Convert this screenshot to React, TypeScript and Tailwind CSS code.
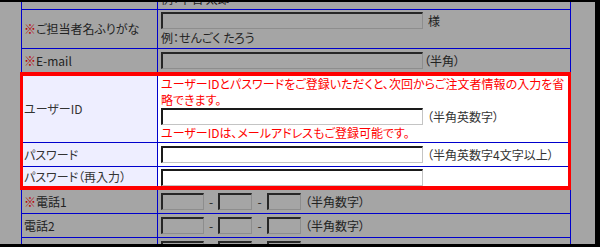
import React from "react";

// dimmed form table with the highlighted (red framed) login block

type FieldProps = { w: string; dim?: boolean };

const Field: React.FC<FieldProps> = ({ w, dim }) => (
  <input
    type="text"
    readOnly
    className={
      dim
        ? `${w} h-[17px] shrink-0 bg-[#a5a5a5] border-t-2 border-l-2 border-r border-b border-t-[#262626] border-l-[#262626] border-r-[#8d8d8d] border-b-[#8d8d8d] outline-none`
        : `${w} h-[17px] shrink-0 bg-white border-t-2 border-l-2 border-r border-b border-t-[#1a1a1a] border-l-[#1a1a1a] border-r-[#c4c4c4] border-b-[#c4c4c4] outline-none`
    }
  />
);

const Req = () => <span className="text-[#b80000]">※</span>;

const Dash = () => <span className="w-[14px] text-center shrink-0">-</span>;

const TelInputs = () => (
  <div className="flex items-center pl-[3px] flex-1">
    <Field w="w-[43px]" dim />
    <Dash />
    <Field w="w-[34px]" dim />
    <span className="w-[15px] text-center shrink-0">-</span>
    <Field w="w-[34px]" dim />
    <span className="ml-[4px]">（半角数字）</span>
  </div>
);

export default function App() {
  return (
    <div className="w-[600px] h-[247px] overflow-hidden bg-[#a5a5a5] border-t-2 border-r-[5px] border-b-[3px] border-black text-[12px] leading-4 text-[#222] font-['Noto_Sans_CJK_JP','Noto_Sans',sans-serif] [font-feature-settings:'palt']">
      <div className="ml-[21px] w-[550px] -mt-[31px]">
        {/* お名前 (cut off) */}
        <div className="flex h-[39px] border-x border-b border-[#0000cc]">
          <div className="w-[136px] border-r border-[#0000cc]" />
          <div className="flex-1 pl-[3px] pt-[2px]">
            <div className="flex items-center h-[17px]">
              <Field w="w-[262px]" dim />
            </div>
            <div className="leading-[17px]">例：千石 太郎</div>
          </div>
        </div>

        {/* ふりがな */}
        <div className="flex h-[39px] border-x border-b border-[#0000cc]">
          <div className="w-[136px] border-r border-[#0000cc] flex items-center pl-[2px]">
            <Req />ご担当者名ふりがな
          </div>
          <div className="flex-1 pl-[3px] pt-[2px]">
            <div className="flex items-center h-[17px]">
              <Field w="w-[262px]" dim />
              <span className="ml-[5px]">様</span>
            </div>
            <div className="leading-[17px]">例：せんごく たろう</div>
          </div>
        </div>

        {/* E-mail */}
        <div className="flex h-[23px] border-x border-[#0000cc]">
          <div className="w-[136px] border-r border-[#0000cc] flex items-center pl-[2px]">
            <Req />E-mail
          </div>
          <div className="flex-1 pl-[3px] flex items-center">
            <Field w="w-[262px]" dim />
            <span className="ml-[1px]">（半角）</span>
          </div>
        </div>

        {/* highlighted block */}
        <div className="-ml-px w-[551px] border-x-[3px] border-y-4 border-[#ff0000] bg-white text-[#333]">
          <div className="flex h-[67px] border-b border-[#0000cc]">
            <div className="w-[135px] bg-[#eeeeff] border-r border-[#0000cc] flex items-center pl-[1px]">
              ユーザーID
            </div>
            <div className="flex-1 pl-[3px] whitespace-nowrap">
              <div className="text-[#ff0000]">
                ユーザーIDとパスワードをご登録いただくと、次回からご注文者情報の入力を省
                <br />
                略できます。
              </div>
              <div className="flex items-center h-[17px]">
                <Field w="w-[262px]" />
                <span className="ml-[4px]">（半角英数字）</span>
              </div>
              <div className="text-[#ff0000]">ユーザーIDは、メールアドレスもご登録可能です。</div>
            </div>
          </div>
          <div className="flex h-[24px] border-b border-[#0000cc]">
            <div className="w-[135px] bg-[#eeeeff] border-r border-[#0000cc] flex items-center pl-[1px]">
              パスワード
            </div>
            <div className="flex-1 pl-[3px] flex items-center">
              <Field w="w-[262px]" />
              <span className="ml-[4px]">（半角英数字4文字以上）</span>
            </div>
          </div>
          <div className="flex h-[19px]">
            <div className="w-[135px] bg-[#eeeeff] border-r border-[#0000cc] flex items-center pl-[1px]">
              パスワード（再入力）
            </div>
            <div className="flex-1 pl-[3px] pt-[2px]">
              <Field w="w-[262px]" />
            </div>
          </div>
        </div>

        {/* 電話 */}
        <div className="flex h-[24px] border-x border-b border-[#0000cc]">
          <div className="w-[136px] border-r border-[#0000cc] flex items-center pl-[2px]">
            <Req />電話1
          </div>
          <TelInputs />
        </div>
        <div className="flex h-[24px] border-x border-b border-[#0000cc]">
          <div className="w-[136px] border-r border-[#0000cc] flex items-center pl-[2px]">
            電話2
          </div>
          <TelInputs />
        </div>
        <div className="flex h-[24px] border-x border-b border-[#0000cc]">
          <div className="w-[136px] border-r border-[#0000cc] flex items-center pl-[2px]">
            FAX番号
          </div>
          <TelInputs />
        </div>
      </div>
    </div>
  );
}
